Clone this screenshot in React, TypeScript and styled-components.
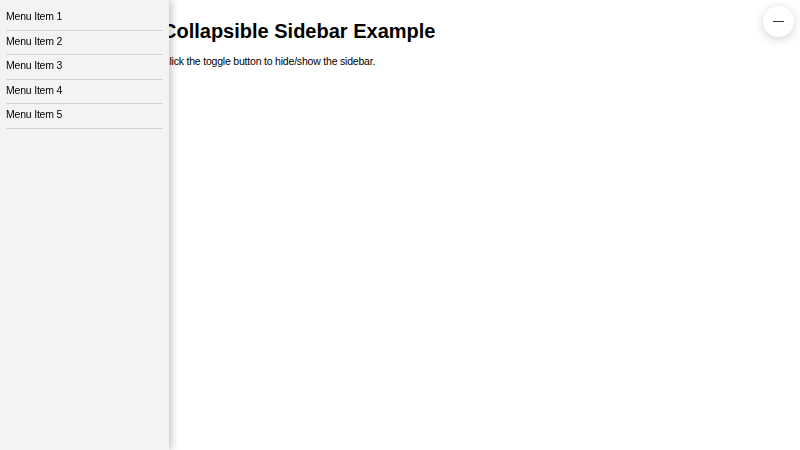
import React, { useState } from "react";
import styled, { createGlobalStyle } from "styled-components";

const GlobalStyle = createGlobalStyle`
  html, body {
    margin: 0;
    padding: 0;
    background: #ffffff;
    font-family: "Liberation Sans", Arial, sans-serif;
    color: #000000;
  }
  * {
    box-sizing: border-box;
  }
`;

const menuItems = ["Menu Item 1", "Menu Item 2", "Menu Item 3", "Menu Item 4", "Menu Item 5"];

const App = (): JSX.Element => {
  const [open, setOpen] = useState<boolean>(true);

  return (
    <>
      <GlobalStyle />
      <Page>
        <Main>
          <Title>Collapsible Sidebar Example</Title>
          <Text>Click the toggle button to hide/show the sidebar.</Text>
        </Main>
        <Sidebar open={open}>
          <Menu>
            {menuItems.map((item) => (
              <MenuItem key={item}>{item}</MenuItem>
            ))}
          </Menu>
        </Sidebar>
        <ToggleButton aria-label="Toggle sidebar" onClick={() => setOpen(!open)}>
          <Bar />
        </ToggleButton>
      </Page>
    </>
  );
};

const Page = styled.div`
  position: relative;
  width: 100%;
  height: 100vh;
  overflow: hidden;
`;

const Main = styled.main`
  padding: 19px 20px 0 162px;
`;

const Title = styled.h1`
  margin: 0 0 12px;
  font-size: 20px;
  font-weight: bold;
  line-height: 24px;
`;

const Text = styled.p`
  margin: 0;
  font-size: 10.5px;
  line-height: 12px;
  letter-spacing: -0.2px;
`;

const Sidebar = styled.aside<{ open: boolean }>`
  position: fixed;
  top: 0;
  left: 0;
  width: 169px;
  height: 100vh;
  padding: 6px;
  background: #f3f3f3;
  box-shadow: 2px 0 8px rgba(0, 0, 0, 0.25);
  transform: translateX(${(p) => (p.open ? "0" : "-100%")});
  transition: transform 0.3s ease;
`;

const Menu = styled.ul`
  margin: 0;
  padding: 0;
  list-style: none;
`;

const MenuItem = styled.li`
  padding: 4px 0 6px;
  font-size: 10.5px;
  line-height: 13.5px;
  letter-spacing: -0.2px;
  border-bottom: 1px solid #d4d4d4;
  cursor: pointer;
`;

const ToggleButton = styled.button`
  position: fixed;
  top: 6px;
  right: 6px;
  width: 31px;
  height: 31px;
  border: none;
  border-radius: 50%;
  background: #ffffff;
  box-shadow: 0 2px 10px rgba(0, 0, 0, 0.18);
  display: flex;
  align-items: center;
  justify-content: center;
  padding: 0;
  cursor: pointer;
`;

const Bar = styled.span`
  display: block;
  width: 11px;
  height: 1.5px;
  background: #333333;
`;

export default App;
